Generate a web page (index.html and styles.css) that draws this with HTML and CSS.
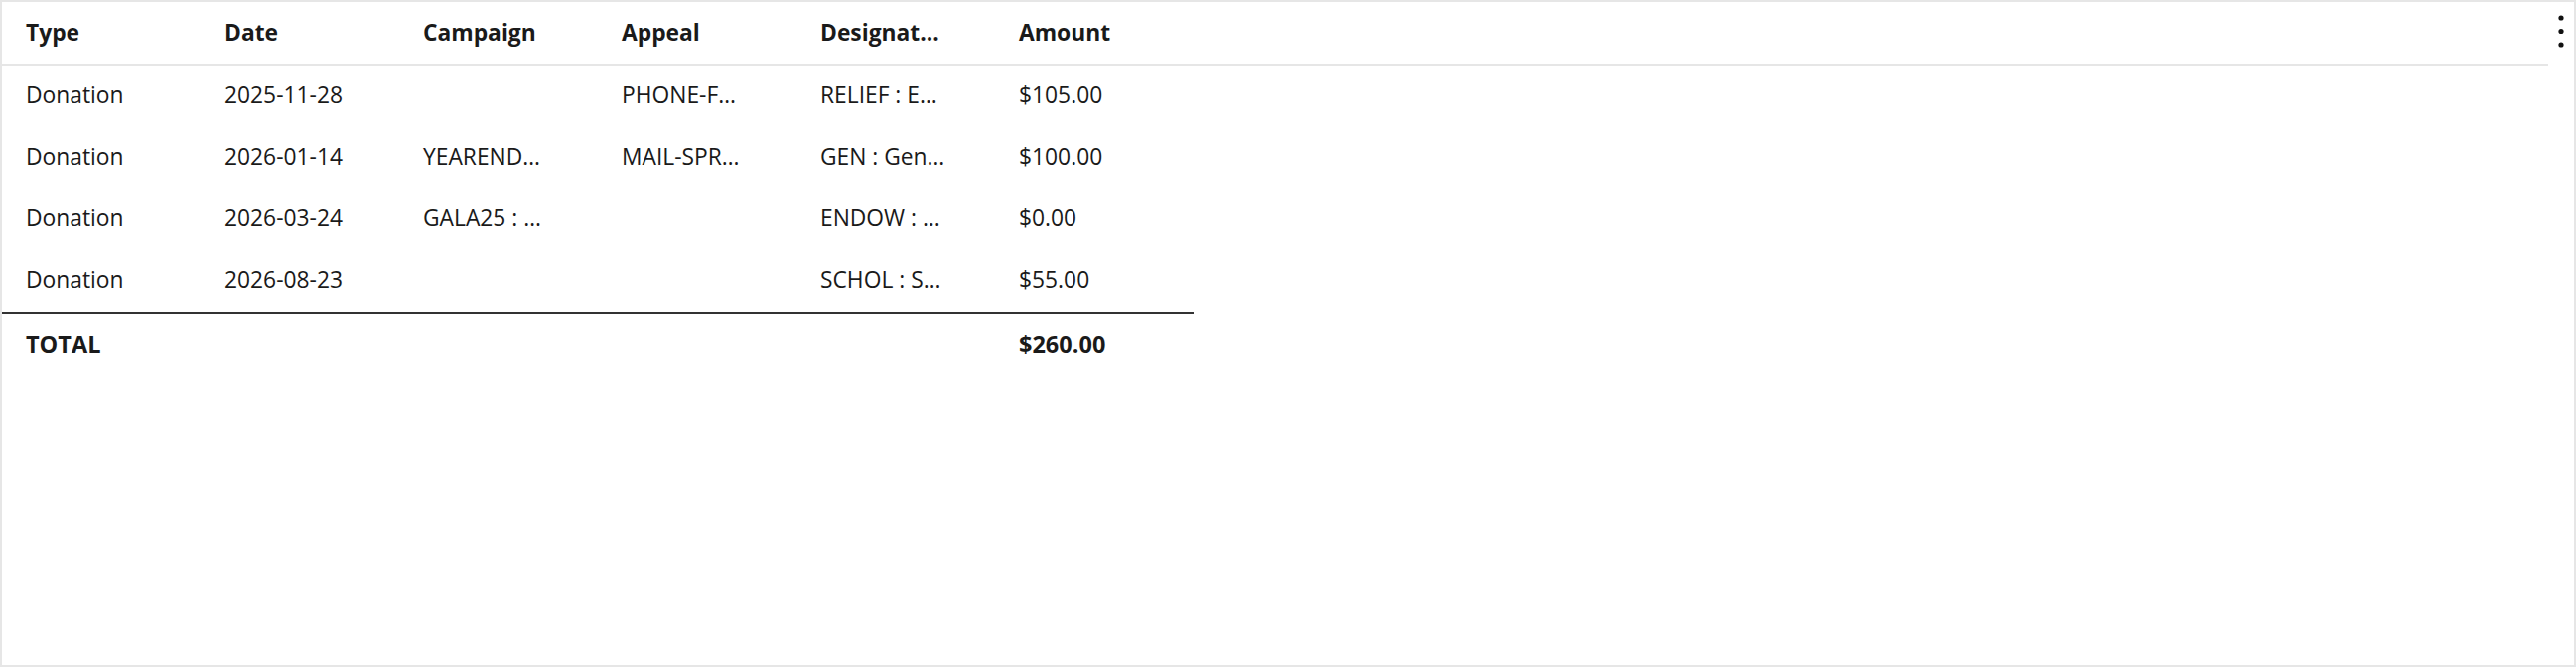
FILE: index.html
```html
<!DOCTYPE html>
<html lang="en">
<head>
  <meta charset="UTF-8">
  <title>Gift history</title>
  <link rel="stylesheet" href="styles.css">
</head>
<body>
  <div class="panel">
    <div class="table-wrap">
      <table class="gift-table">
        <colgroup>
          <col class="col-fixed">
          <col class="col-fixed">
          <col class="col-fixed">
          <col class="col-fixed">
          <col class="col-fixed">
          <col class="col-fixed">
          <col>
        </colgroup>
        <thead>
          <tr>
            <th>Type</th>
            <th>Date</th>
            <th>Campaign</th>
            <th>Appeal</th>
            <th>Designat…</th>
            <th>Amount</th>
            <th></th>
          </tr>
        </thead>
        <tbody>
          <tr>
            <td>Donation</td>
            <td>2025-11-28</td>
            <td></td>
            <td>PHONE-F…</td>
            <td>RELIEF : E…</td>
            <td>$105.00</td>
            <td></td>
          </tr>
          <tr>
            <td>Donation</td>
            <td>2026-01-14</td>
            <td>YEAREND…</td>
            <td>MAIL-SPR…</td>
            <td>GEN : Gen…</td>
            <td>$100.00</td>
            <td></td>
          </tr>
          <tr>
            <td>Donation</td>
            <td>2026-03-24</td>
            <td>GALA25 : …</td>
            <td></td>
            <td>ENDOW : …</td>
            <td>$0.00</td>
            <td></td>
          </tr>
          <tr>
            <td>Donation</td>
            <td>2026-08-23</td>
            <td></td>
            <td></td>
            <td>SCHOL : S…</td>
            <td>$55.00</td>
            <td></td>
          </tr>
        </tbody>
        <tfoot>
          <tr>
            <td class="sum">TOTAL</td>
            <td class="sum"></td>
            <td class="sum"></td>
            <td class="sum"></td>
            <td class="sum"></td>
            <td class="sum">$260.00</td>
            <td></td>
          </tr>
        </tfoot>
      </table>
    </div>
    <button class="kebab" aria-label="More options">
      <svg width="6" height="34" viewBox="0 0 6 34">
        <circle cx="3" cy="3" r="2.6"/>
        <circle cx="3" cy="16.5" r="2.6"/>
        <circle cx="3" cy="30" r="2.6"/>
      </svg>
    </button>
  </div>
</body>
</html>
```

FILE: styles.css
```css
:root {
  --text: #1a1a1a;
  --frame: #e6e6e6;
  --total-line: #333333;
}

* {
  margin: 0;
  padding: 0;
  box-sizing: border-box;
}

body {
  font-family: "Open Sans", "Liberation Sans", sans-serif;
  color: var(--text);
  background: white;
}

.panel {
  height: 672px;
  border: 2px solid var(--frame);
  display: flex;
  align-items: flex-start;
}

.table-wrap {
  flex: 1;
  min-width: 0;
}

.gift-table {
  width: 100%;
  table-layout: fixed;
  border-collapse: separate;
  border-spacing: 0;
  font-size: 22.8px;
}

.col-fixed {
  width: 200px;
}

.gift-table th,
.gift-table td {
  box-sizing: content-box;
  height: 61px;
  padding: 0 24px 1px;
  text-align: left;
  white-space: nowrap;
  overflow: hidden;
  text-overflow: ellipsis;
  vertical-align: middle;
}

.gift-table th {
  font-weight: 700;
  border-bottom: 2px solid var(--frame);
}

.gift-table tbody td {
  height: 59px;
  padding-bottom: 3px;
}

.gift-table tfoot td {
  font-weight: 700;
  font-size: 23.5px;
}

.gift-table td.sum {
  border-top: 2px solid var(--total-line);
}

.kebab {
  width: 26px;
  border: none;
  background: none;
  display: flex;
  justify-content: center;
  padding-top: 13px;
  cursor: pointer;
}

.kebab svg {
  fill: #111;
}
```
